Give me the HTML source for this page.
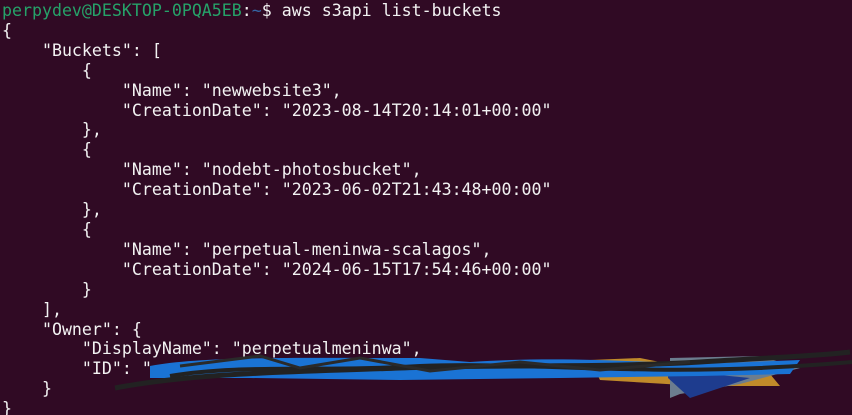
<!DOCTYPE html>
<html><head><style>
html,body{margin:0;padding:0;background:#300a24;width:852px;height:415px;overflow:hidden}
pre{margin:0;padding:1px 0 0 2px;font-family:"DejaVu Sans Mono","Liberation Mono",monospace;font-size:16.6px;line-height:19.9px;color:#f2f2f2;letter-spacing:0}
.g{color:#26a269}.b{color:#3465a4}
svg{position:absolute;left:0;top:0}
</style></head><body>
<pre><span class="g">perpydev@DESKTOP-0PQA5EB</span>:<span class="b">~</span>$ aws s3api list-buckets
{
    "Buckets": [
        {
            "Name": "newwebsite3",
            "CreationDate": "2023-08-14T20:14:01+00:00"
        },
        {
            "Name": "nodebt-photosbucket",
            "CreationDate": "2023-06-02T21:43:48+00:00"
        },
        {
            "Name": "perpetual-meninwa-scalagos",
            "CreationDate": "2024-06-15T17:54:46+00:00"
        }
    ],
    "Owner": {
        "DisplayName": "perpetualmeninwa",
        "ID": "
    }
}</pre>
<svg width="852" height="415">
<path d="M590 360 L640 358 L680 366 L720 368 L770 374 L780 386 L700 386 L600 380 Z" fill="#c08a2a"/>
<path d="M670 358 L760 356 L800 368 L740 384 L680 394 L670 398 Z" fill="#6c7d8f"/>
<path d="M668 378 L690 398 L750 378 L668 370 Z" fill="#1e3c8e"/>
<path d="M150 366 C200 356 300 358 420 358 L470 362 C560 356 640 362 700 364 L800 360 L790 374 L700 376 L560 378 L400 380 L250 378 L150 378 Z" fill="#1a73d4"/>
<path d="M115 388 C200 372 300 372 400 368 C500 364 600 368 700 362 C760 358 820 356 850 352" stroke="#222" stroke-width="5" fill="none"/>
<path d="M170 376 C240 364 320 372 420 366 C520 362 620 374 760 368 C800 366 830 364 852 362" stroke="#222" stroke-width="4" fill="none"/>
<path d="M180 366 L260 356 L300 368 L360 358 L430 371 L520 362 L600 370 L690 362" stroke="#2a2a2a" stroke-width="3" fill="none"/>
</svg>
</body></html>
